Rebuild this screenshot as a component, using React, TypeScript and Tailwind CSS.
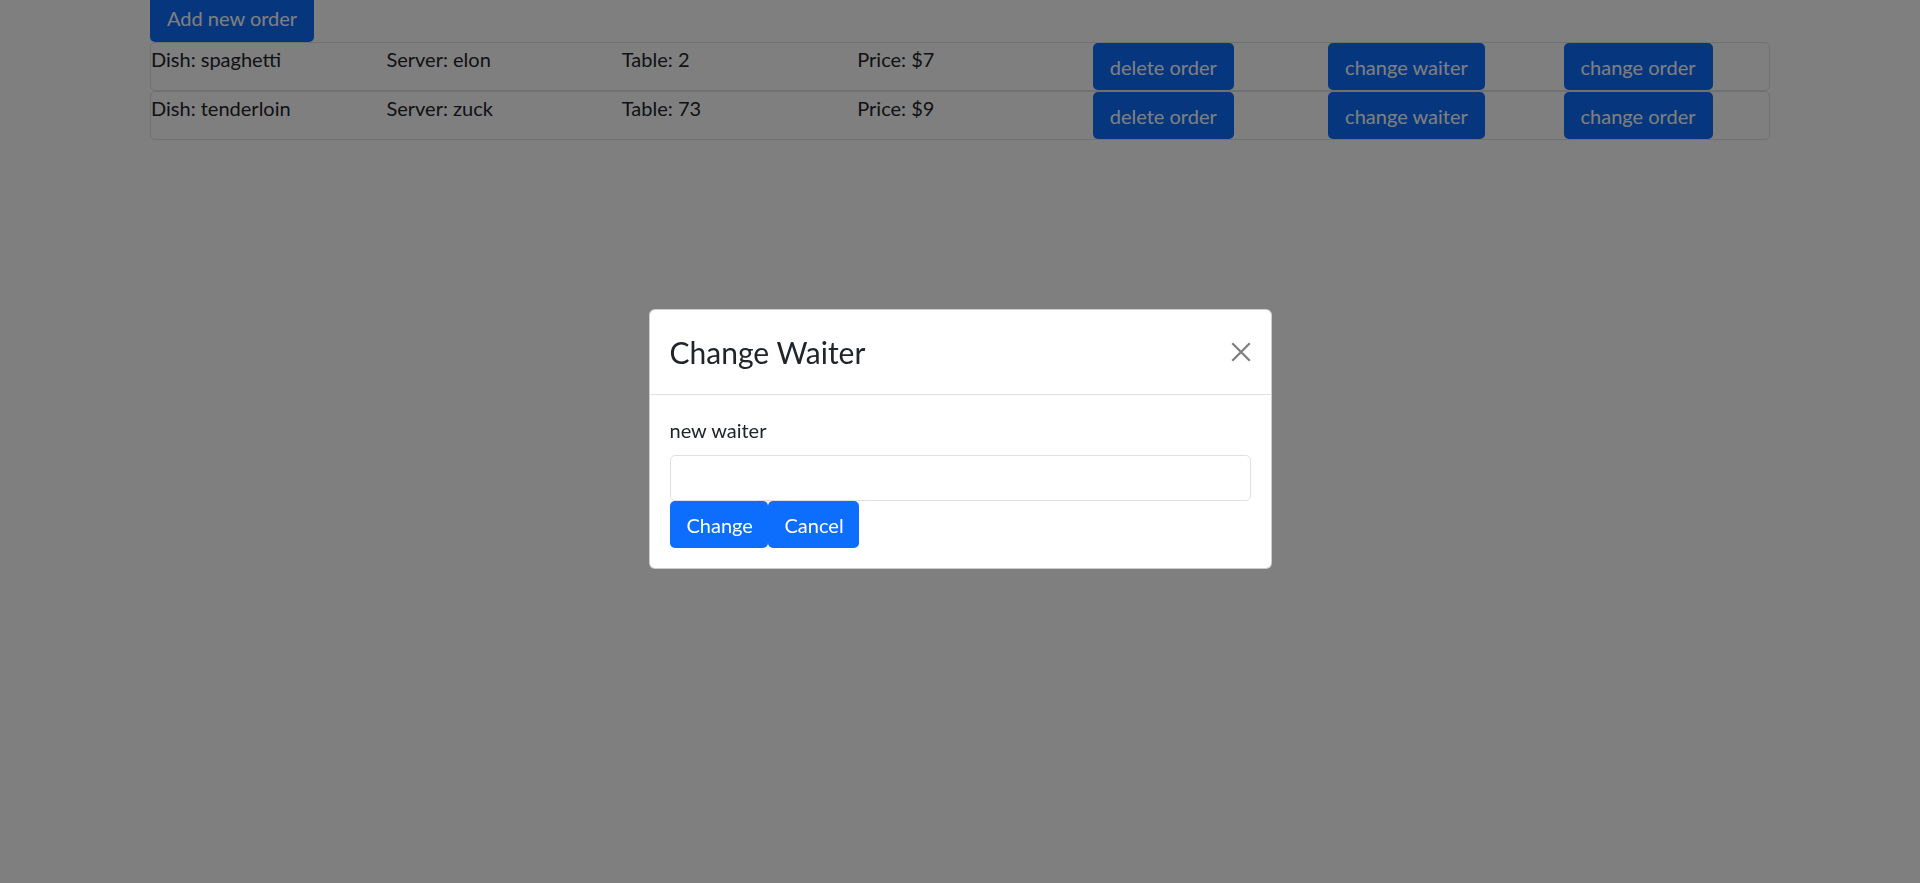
import React from "react";

interface Order {
  dish: string;
  server: string;
  table: number;
  price: number;
}

const orders: Order[] = [
  { dish: "spaghetti", server: "elon", table: 2, price: 7 },
  { dish: "tenderloin", server: "zuck", table: 73, price: 9 },
];

const btn =
  "h-[47px] px-[17px] bg-[#0d6efd] text-white rounded-[5px] text-[20px] leading-[30px] whitespace-nowrap";

const OrderRow: React.FC<{ order: Order }> = ({ order }) => (
  <div className="border border-[#dee2e6] rounded-[5px]">
    <div className="flex -mx-[15px]">
      <div className="flex-1 px-[15px] pt-[1px]">Dish: {order.dish}</div>
      <div className="flex-1 px-[15px] pt-[1px]">Server: {order.server}</div>
      <div className="flex-1 px-[15px] pt-[1px]">Table: {order.table}</div>
      <div className="flex-1 px-[15px] pt-[1px]">Price: ${order.price}</div>
      <div className="flex-1 px-[15px]">
        <button className={btn}>delete order</button>
      </div>
      <div className="flex-1 px-[15px]">
        <button className={btn}>change waiter</button>
      </div>
      <div className="flex-1 px-[15px]">
        <button className={btn}>change order</button>
      </div>
    </div>
  </div>
);

export default function App() {
  return (
    <div
      className="min-h-screen bg-white text-[#212529] text-[20px] leading-[30px]"
      style={{ fontFamily: "Lato, 'Noto Sans', sans-serif" }}
    >
      <div className="w-[1650px] mx-auto px-[15px]">
        <button className="h-[47.5px] -mt-[5.5px] px-[17px] bg-[#0d6efd] text-white rounded-[5px] text-[20px] leading-[30px] block">
          Add new order
        </button>
        {orders.map((o) => (
          <OrderRow key={o.dish} order={o} />
        ))}
      </div>

      {/* modal */}
      <div className="fixed inset-0 bg-black/50 flex items-center justify-center pb-[5px]">
        <div className="w-[623px] bg-white border border-black/20 rounded-[6px]">
          <div className="h-[85px] px-[20px] flex items-center justify-between border-b border-[#dee2e6]">
            <h4 className="text-[30px] leading-[45px] font-normal">Change Waiter</h4>
            <button className="w-[20px] h-[20px] opacity-50">
              <svg viewBox="0 0 16 16" width="20" height="20">
                <path
                  d="M1 1L15 15M15 1L1 15"
                  stroke="#000"
                  strokeWidth="1.8"
                  fill="none"
                />
              </svg>
            </button>
          </div>
          <div className="p-[20px]">
            <label className="block mb-[10px]">new waiter</label>
            <input className="block w-full h-[46px] border border-[#dee2e6] rounded-[5px] px-[15px] outline-none" />
            <div className="flex">
              <button className={btn + " w-[98px]"}>Change</button>
              <button className={btn + " w-[91px]"}>Cancel</button>
            </div>
          </div>
        </div>
      </div>
    </div>
  );
}
